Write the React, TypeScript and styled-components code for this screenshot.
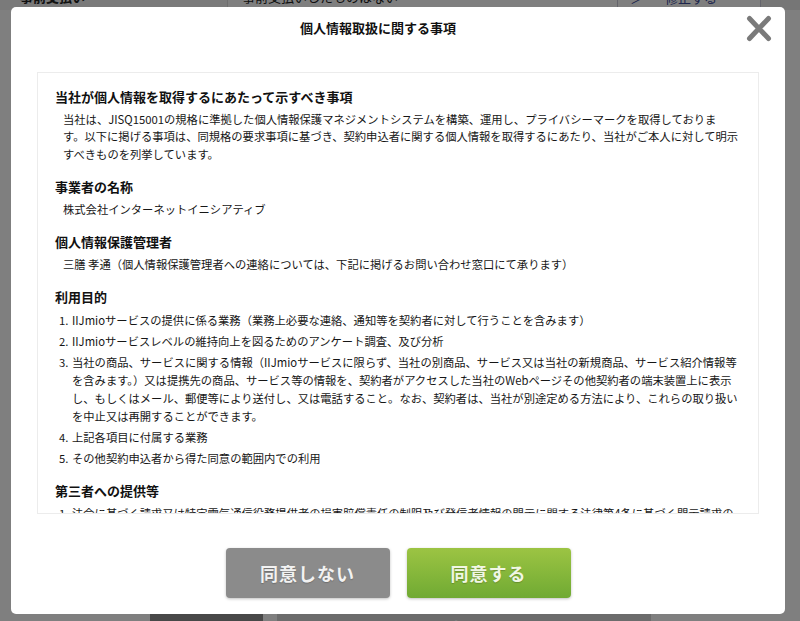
import React from "react";
import styled, { createGlobalStyle } from "styled-components";

const GlobalStyle = createGlobalStyle`
  html, body {
    margin: 0;
    padding: 0;
    width: 800px;
    height: 621px;
    overflow: hidden;
    background: #ffffff;
    font-family: "Noto Sans CJK JP", "Noto Sans", sans-serif;
  }
  * { box-sizing: border-box; }
`;

/* ---------- underlying page (scrolled, dimmed by overlay) ---------- */
const Page = styled.div`
  width: 800px;
  height: 621px;
  display: flex;
  flex-direction: column;
  justify-content: space-between;
  overflow: hidden;
`;

const TableRow = styled.div`
  display: grid;
  grid-template-columns: 228px 389px 144px 1fr;
  margin-top: -14px;
  height: 22px;
  border-bottom: 1px solid #dcdcdc;
`;

const LabelCell = styled.div`
  background: #f4f4f4;
  border-right: 1px solid #dcdcdc;
  padding-left: 20px;
  font-size: 13px;
  font-weight: 700;
  line-height: 22px;
  color: #222;
`;

const ValueCell = styled.div`
  padding-left: 14px;
  font-size: 13px;
  line-height: 22px;
  color: #222;
`;

const EditButton = styled.div`
  border: 1px solid #c9c9d6;
  display: flex;
  gap: 22px;
  padding-left: 12px;
  font-size: 13px;
  line-height: 22px;
  color: #3a4a9a;
`;

const RightGutter = styled.div`
  background: #ececec;
`;

const Nav = styled.div`
  display: flex;
  justify-content: center;
  gap: 14px;
  margin-bottom: -40px;
  padding-left: 1px;
`;

const NavButton = styled.div<{ $dark?: boolean }>`
  width: ${(p) => (p.$dark ? "113px" : "374px")};
  height: 47px;
  background: ${(p) => (p.$dark ? "#909090" : "#d8d8d8")};
  color: #fff;
  font-size: 15px;
  font-weight: 700;
  display: flex;
  align-items: flex-start;
  justify-content: center;
  padding-top: 2px;
`;

/* ---------- overlay & modal ---------- */
const Overlay = styled.div`
  position: fixed;
  inset: 0;
  background: rgba(0, 0, 0, 0.5);
`;

const Modal = styled.div`
  position: fixed;
  top: 7px;
  left: 11px;
  width: 774px;
  height: 607px;
  background: #ffffff;
  border-radius: 5px;
  padding: 11px 26px 16px;
  display: flex;
  flex-direction: column;
`;

const Title = styled.h2`
  margin: 0;
  padding-right: 40px;
  font-size: 13px;
  font-weight: 700;
  line-height: 20px;
  text-align: center;
  color: #111;
`;

const CloseButton = styled.button`
  position: absolute;
  top: 7px;
  right: 12px;
  width: 28px;
  height: 28px;
  padding: 0;
  border: 0;
  background: transparent;
  cursor: pointer;
  display: flex;
  align-items: center;
  justify-content: center;
`;

const ContentBox = styled.div`
  flex-shrink: 0;
  margin-top: 34px;
  height: 442px;
  border: 1px solid #ececec;
  overflow-y: auto;
  padding: 14px 12px 0 17px;
  color: #161616;
  &::-webkit-scrollbar { display: none; }
  scrollbar-width: none;
`;

const Section = styled.section`
  margin-bottom: 14px;
`;

const Heading = styled.h3`
  margin: 0 0 4px;
  font-size: 13px;
  font-weight: 700;
  line-height: 19.5px;
  color: #111;
`;

const Paragraph = styled.p`
  margin: 0;
  padding-left: 8px;
  font-size: 11.3px;
  line-height: 17.5px;
`;

const List = styled.ol`
  margin: 4px 0 0;
  padding-left: 16px;
  font-size: 11.3px;
`;

const Item = styled.li`
  line-height: 18px;
  margin-bottom: 3px;
  padding-left: 1px;
`;

const Footer = styled.div`
  flex-shrink: 0;
  margin-top: 34px;
  display: flex;
  justify-content: center;
  gap: 17px;
`;

const ActionButton = styled.button<{ $primary?: boolean }>`
  width: 164px;
  height: 50px;
  border: 0;
  border-radius: 4px;
  font-family: "Noto Sans CJK JP", "Noto Sans", sans-serif;
  font-size: 18px;
  font-weight: 700;
  letter-spacing: 1px;
  color: ${(p) => (p.$primary ? "#f1f7e4" : "#f2f2f2")};
  text-shadow: 0 1px 1px rgba(0, 0, 0, 0.2);
  background: ${(p) =>
    p.$primary
      ? "linear-gradient(to bottom, #9cc443 0%, #70aa33 100%)"
      : "#8b8b8b"};
  box-shadow: 0 1px 3px rgba(0, 0, 0, 0.25);
  cursor: pointer;
`;

const CloseIcon = () => (
  <svg width="26" height="27" viewBox="0 0 26 27" aria-hidden="true">
    <path
      d="M3.5 3.5 L22.5 23.5 M22.5 3.5 L3.5 23.5"
      stroke="#7a7a7a"
      strokeWidth="5"
      strokeLinecap="round"
      fill="none"
    />
  </svg>
);

export default function App() {
  return (
    <>
      <GlobalStyle />
      <Page>
        <TableRow>
          <LabelCell>事前支払い</LabelCell>
          <ValueCell>事前支払いしたものはない</ValueCell>
          <EditButton>
            <span>＞</span>
            <span>修正する</span>
          </EditButton>
          <RightGutter />
        </TableRow>
        <Nav>
          <NavButton $dark>戻る</NavButton>
          <NavButton>次へ</NavButton>
        </Nav>
      </Page>
      <Overlay />
      <Modal>
        <Title>個人情報取扱に関する事項</Title>
        <CloseButton aria-label="閉じる">
          <CloseIcon />
        </CloseButton>
        <ContentBox>
          <Section>
            <Heading>当社が個人情報を取得するにあたって示すべき事項</Heading>
            <Paragraph>
              当社は、JISQ15001の規格に準拠した個人情報保護マネジメントシステムを構築、運用し、プライバシーマークを取得しておりま
              <br />
              す。以下に掲げる事項は、同規格の要求事項に基づき、契約申込者に関する個人情報を取得するにあたり、当社がご本人に対して明示
              <br />
              すべきものを列挙しています。
            </Paragraph>
          </Section>
          <Section>
            <Heading>事業者の名称</Heading>
            <Paragraph>株式会社インターネットイニシアティブ</Paragraph>
          </Section>
          <Section>
            <Heading>個人情報保護管理者</Heading>
            <Paragraph>
              三膳 孝通（個人情報保護管理者への連絡については、下記に掲げるお問い合わせ窓口にて承ります）
            </Paragraph>
          </Section>
          <Section>
            <Heading>利用目的</Heading>
            <List>
              <Item>
                IIJmioサービスの提供に係る業務（業務上必要な連絡、通知等を契約者に対して行うことを含みます）
              </Item>
              <Item>IIJmioサービスレベルの維持向上を図るためのアンケート調査、及び分析</Item>
              <Item>
                当社の商品、サービスに関する情報（IIJmioサービスに限らず、当社の別商品、サービス又は当社の新規商品、サービス紹介情報等
                <br />
                を含みます。）又は提携先の商品、サービス等の情報を、契約者がアクセスした当社のWebページその他契約者の端末装置上に表示
                <br />
                し、もしくはメール、郵便等により送付し、又は電話すること。なお、契約者は、当社が別途定める方法により、これらの取り扱い
                <br />
                を中止又は再開することができます。
              </Item>
              <Item>上記各項目に付属する業務</Item>
              <Item>その他契約申込者から得た同意の範囲内での利用</Item>
            </List>
          </Section>
          <Section>
            <Heading>第三者への提供等</Heading>
            <List>
              <Item>
                法令に基づく請求又は特定電気通信役務提供者の損害賠償責任の制限及び発信者情報の開示に関する法律第4条に基づく開示請求の
                <br />
                要件が充足された場合には、当該請求の範囲内で個人情報を第三者に開示することがあります。
              </Item>
            </List>
          </Section>
        </ContentBox>
        <Footer>
          <ActionButton>同意しない</ActionButton>
          <ActionButton $primary>同意する</ActionButton>
        </Footer>
      </Modal>
    </>
  );
}
